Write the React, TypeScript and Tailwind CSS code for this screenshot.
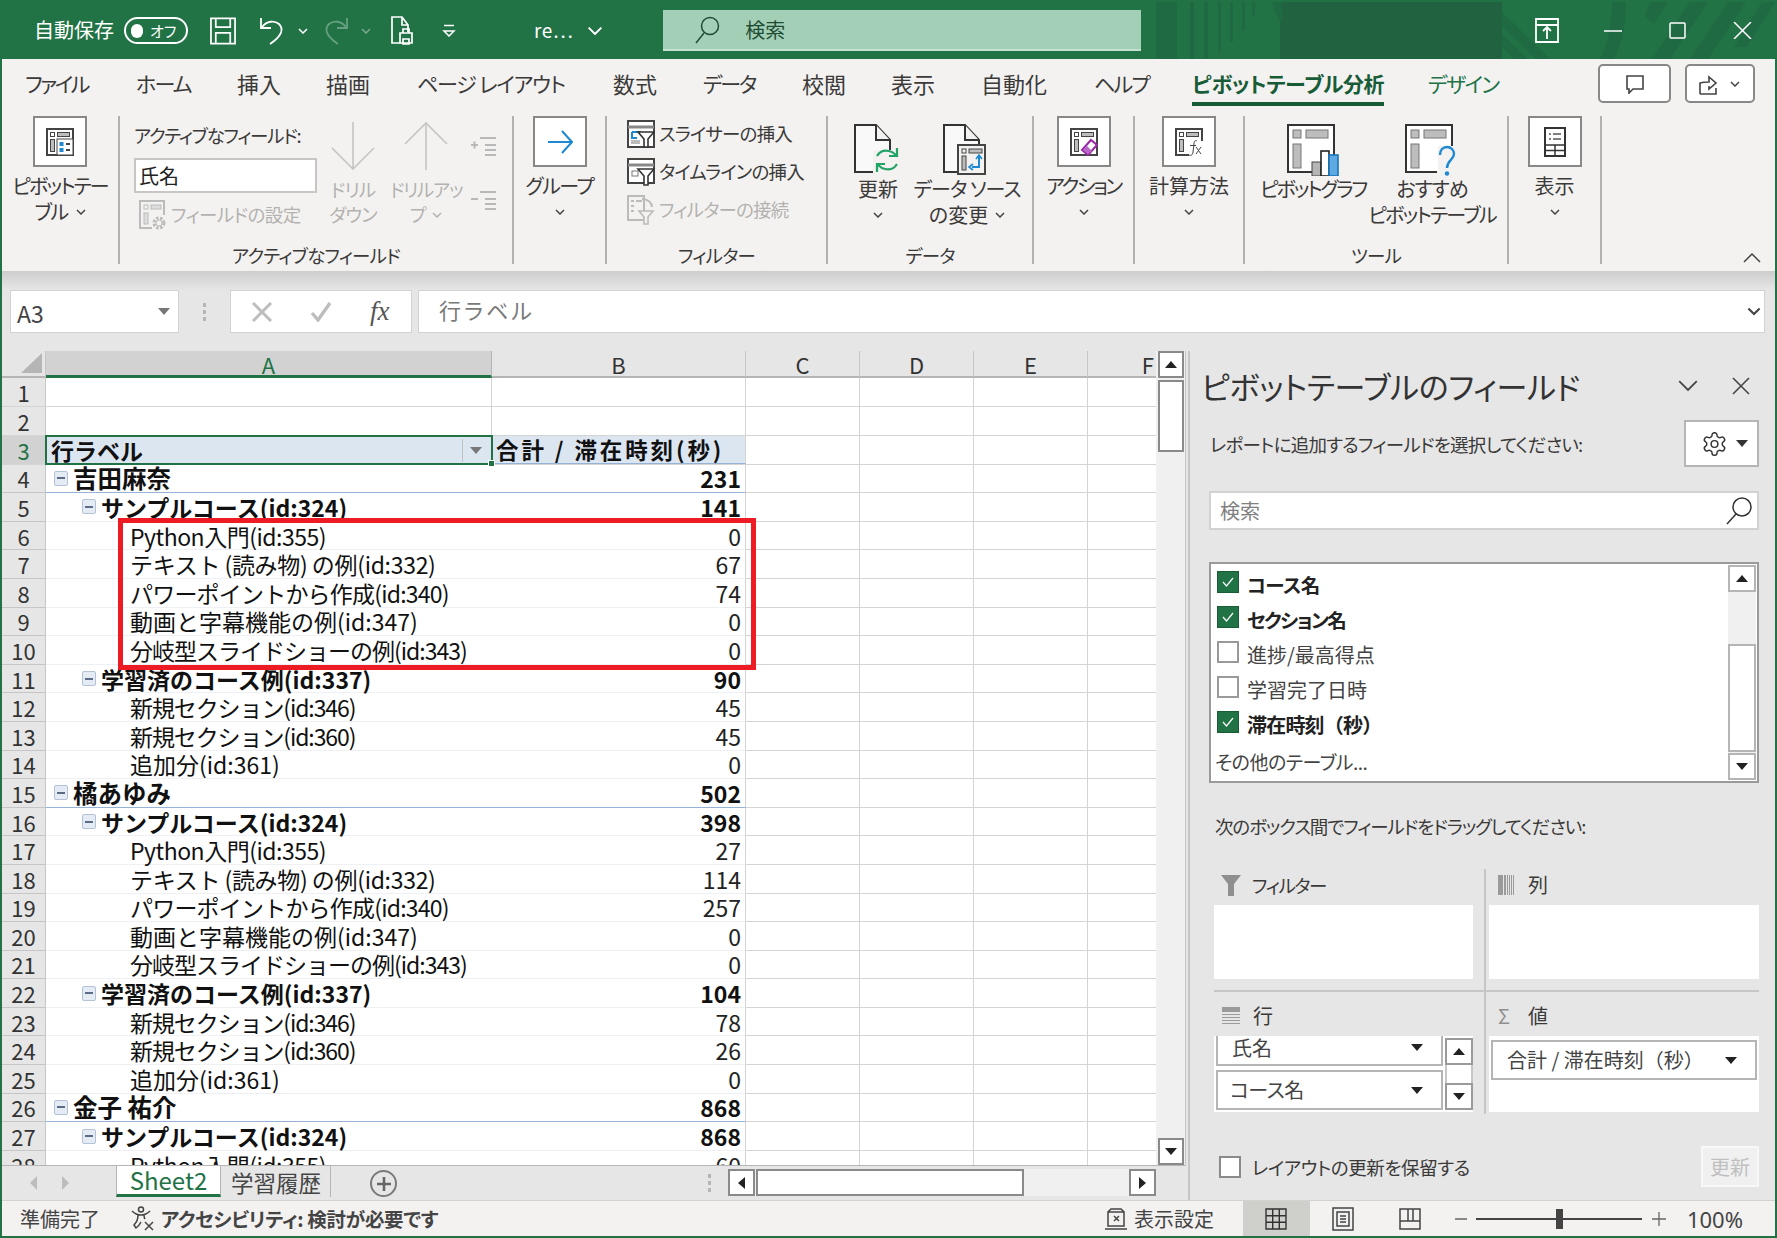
import React from "react";

function Chev({ className = "", w = 10, color = "#444", sw = 1.5 }: { className?: string; w?: number; color?: string; sw?: number }) {
  return (
    <svg width={w} height={w * 0.6} viewBox="0 0 10 6" className={className} fill="none" stroke={color} strokeWidth={sw}>
      <path d="M1 1l4 4 4-4" />
    </svg>
  );
}
function Tri({ dir = "down", color = "#222", className = "" }: { dir?: "down" | "up" | "left" | "right"; color?: string; className?: string }) {
  const d = { down: "M0 0h12L6 7z", up: "M0 7h12L6 0z", left: "M7 0v12L0 6z", right: "M0 0v12l7-6z" }[dir];
  const horiz = dir === "left" || dir === "right";
  return (
    <svg width={horiz ? 7 : 12} height={horiz ? 12 : 7} viewBox={horiz ? "0 0 7 12" : "0 0 12 7"} className={className}>
      <path d={d} fill={color} />
    </svg>
  );
}

function PivotBase({ size = 28, children }: { size?: number; children?: React.ReactNode }) {
  const c = "#444";
  const f = "#bdbdbd";
  return (
    <svg width={size} height={size} viewBox="0 0 28 28">
      <path d="M1 27V1h26v26z" fill="#fff" stroke={c} strokeWidth="2" />
      <rect x="4.5" y="4.5" width="4" height="4" fill="none" stroke={c} />
      <rect x="11.5" y="4.5" width="12" height="4" fill={f} stroke={c} />
      <rect x="4.5" y="11.5" width="4" height="12" fill={f} stroke={c} />
      {children}
    </svg>
  );
}
const PivotTableIcon = () => (
  <PivotBase>
    <rect x="11" y="11" width="16" height="16" fill="#fff" stroke="#444" />
    <rect x="13.5" y="14" width="4" height="4" fill="#1e88d2" />
    <rect x="13.5" y="20" width="4" height="4" fill="#1e88d2" />
    <path d="M20 16h4M20 22h4" stroke="#444" strokeWidth="2" />
  </PivotBase>
);
const ActionIcon = () => (
  <PivotBase>
    <path d="M12 22l9-10 6 5-9 10z" fill="#fff" stroke="#9a27a8" strokeWidth="2" />
    <path d="M13 22l4-4 5 5-4 3z" fill="#b867c6" />
  </PivotBase>
);
const CalcIcon = () => (
  <svg width="28" height="28" viewBox="0 0 28 28">
    <path d="M14 27H1V1h26v12" fill="#fff" stroke="#444" strokeWidth="2" />
    <rect x="4.5" y="4.5" width="4" height="4" fill="none" stroke="#444" />
    <rect x="11.5" y="4.5" width="12" height="4" fill="#bdbdbd" stroke="#444" />
    <rect x="4.5" y="11.5" width="4" height="12" fill="#bdbdbd" stroke="#444" />
    <path d="M22 13c-2-1-3 0-3 3l-1 8c-.3 3-2 4-4 3" fill="none" stroke="#444" />
    <path d="M15 17.5h6" stroke="#444" />
    <path d="M21 19l5 7M26 19l-5 7" stroke="#444" />
  </svg>
);
const ViewIcon = () => (
  <svg width="22" height="30" viewBox="0 0 22 30">
    <rect x="1" y="1" width="20" height="28" fill="#fff" stroke="#333" strokeWidth="2" />
    <path d="M5 7h2M9 7h8M5 12h2M9 12h8" stroke="#555" strokeWidth="1.5" />
    <path d="M1 18h20M1 23.5h20M11 18v11" stroke="#333" strokeWidth="1.5" />
  </svg>
);
const BigDoc = ({ children }: { children?: React.ReactNode }) => (
  <svg width="50" height="52" viewBox="0 0 50 52">
    <path d="M2 1h21l14 15v32H2z" fill="#f9f9f9" stroke="#333" strokeWidth="2" />
    <path d="M23 1v15h14" fill="#f3f2f1" stroke="#333" strokeWidth="2" />
    {children}
  </svg>
);
const RefreshIcon = () => (
  <BigDoc>
    <rect x="20" y="26" width="30" height="26" fill="#f3f2f1" />
    <path d="M24 32c3-5 8-6 12-5 3 .6 5 2 7 4" fill="none" stroke="#21a366" strokeWidth="2.2" />
    <path d="M44 24v8h-8" fill="none" stroke="#21a366" strokeWidth="2.2" />
    <path d="M44 40c-3 5-8 6-12 5-3-.6-5-2-7-4" fill="none" stroke="#21a366" strokeWidth="2.2" />
    <path d="M24 48v-8h8" fill="none" stroke="#21a366" strokeWidth="2.2" />
  </BigDoc>
);
const SourceIcon = () => (
  <BigDoc>
    <rect x="16" y="21" width="27" height="29" fill="#f3f2f1" stroke="#444" strokeWidth="2" />
    <rect x="20" y="25" width="4" height="4" fill="none" stroke="#444" />
    <rect x="27" y="25" width="13" height="4" fill="#bdbdbd" stroke="#444" />
    <rect x="20" y="32" width="4" height="14" fill="#bdbdbd" stroke="#444" />
    <path d="M37 32v11h-7" fill="none" stroke="#1e88d2" strokeWidth="2" />
    <path d="M34 35l3-4 3 4M31 40l-4 3 4 3" fill="none" stroke="#1e88d2" strokeWidth="1.6" />
  </BigDoc>
);
const PivotChartIcon = () => (
  <svg width="52" height="52" viewBox="0 0 52 52">
    <path d="M1 48V1h46v47z" fill="#fff" stroke="#333" strokeWidth="2" />
    <rect x="6" y="6" width="8" height="8" fill="#bdbdbd" stroke="#777" />
    <rect x="19" y="6" width="22" height="8" fill="#bdbdbd" stroke="#777" />
    <rect x="6" y="20" width="8" height="24" fill="#bdbdbd" stroke="#777" />
    <rect x="25" y="38" width="9" height="14" fill="#b5b5b5" stroke="#444" />
    <rect x="34" y="27" width="8" height="25" fill="#fff" stroke="#222" strokeWidth="1.6" />
    <rect x="42" y="31" width="9" height="21" fill="#5ea9e2" stroke="#1673b8" strokeWidth="1.6" />
  </svg>
);
const RecommendIcon = () => (
  <svg width="54" height="52" viewBox="0 0 54 52">
    <rect x="2" y="2" width="44" height="45" fill="#fff" />
    <rect x="6" y="6" width="8" height="8" fill="#bdbdbd" stroke="#777" />
    <rect x="19" y="6" width="22" height="8" fill="#bdbdbd" stroke="#777" />
    <rect x="6" y="20" width="8" height="24" fill="#bdbdbd" stroke="#777" />
    <path d="M47 22V1H1v47h31" stroke="#333" strokeWidth="2" fill="none" />
    <rect x="33" y="22" width="20" height="30" fill="#f3f2f1" />
    <path d="M35 31c0-5 3-8 7-8s7 3 7 7c0 6-7 6-7 14" fill="none" stroke="#1e88d2" strokeWidth="2.4" />
    <circle cx="42" cy="49.5" r="2.2" fill="#1e88d2" />
  </svg>
);
const Slicer = () => (
  <svg width="28" height="28" viewBox="0 0 28 28">
    <rect x="1" y="1" width="26" height="26" fill="#fff" stroke="#444" strokeWidth="2" />
    <path d="M1 7h26" stroke="#888" strokeWidth="3" />
    <path d="M5 12h9M5 12v6h5" stroke="#1e88d2" strokeWidth="2" fill="none" />
    <rect x="4" y="20" width="9" height="4" fill="#bbb" />
    <path d="M11 12h16l-6 7v8h-4v-8z" fill="#fff" stroke="#333" strokeWidth="1.6" />
  </svg>
);
const Timeline = () => (
  <svg width="28" height="28" viewBox="0 0 28 28">
    <rect x="1" y="1" width="26" height="24" fill="#fff" stroke="#444" strokeWidth="2" />
    <path d="M1 7h26" stroke="#888" strokeWidth="3" />
    <rect x="5" y="13" width="6" height="5" fill="#fff" stroke="#777" />
    <path d="M11 11h16l-6 7v9h-4v-9z" fill="#fff" stroke="#333" strokeWidth="1.6" />
  </svg>
);
const ConnectDis = () => (
  <svg width="28" height="30" viewBox="0 0 28 30">
    <path d="M1 1h16v24H1z" fill="#f3f2f1" stroke="#bbb" strokeWidth="2" />
    <path d="M4 6h3M9 6h6M4 11h3M4 16h3" stroke="#bbb" strokeWidth="2" />
    <path d="M15 4c6 0 10 4 10 8" fill="none" stroke="#bbb" strokeWidth="2" />
    <path d="M12 16h14l-5 6v7h-4v-7z" fill="#f3f2f1" stroke="#bbb" strokeWidth="1.6" />
  </svg>
);
const FieldSettingDis = () => (
  <svg width="28" height="30" viewBox="0 0 28 30">
    <path d="M1 29V1h24v14" fill="#f3f2f1" stroke="#bbb" strokeWidth="2" />
    <path d="M1 28h12" stroke="#bbb" strokeWidth="2" />
    <rect x="5" y="5" width="4" height="4" fill="none" stroke="#bbb" />
    <rect x="12" y="5" width="10" height="4" fill="#ddd" stroke="#bbb" />
    <rect x="5" y="13" width="4" height="11" fill="#ddd" stroke="#bbb" />
    <circle cx="20" cy="23" r="5" fill="none" stroke="#bbb" strokeWidth="3" strokeDasharray="2.5 1.5" />
    <circle cx="20" cy="23" r="3" fill="none" stroke="#bbb" />
  </svg>
);
const OutlineBtn = ({ plus }: { plus: boolean }) => (
  <svg width="25" height="20" viewBox="0 0 25 20" stroke="#b8b8b8" strokeWidth="2" fill="none">
    {plus ? <path d="M0 9h7M3.5 5.5v7" /> : <path d="M0 9h7" />}
    <path d="M9 2h16M14 9h11M14 14h11M14 19h11" />
  </svg>
);

function Box({ icon, label, trk = "" }: { icon: React.ReactNode; label: string; trk?: string }) {
  return (
    <div className="flex flex-col items-center w-full">
      <div className="w-[54px] h-[51px] bg-white border-2 border-[#8a8886] flex items-center justify-center">{icon}</div>
      <div className={"h-[26px] mt-[6px] leading-[26px] whitespace-nowrap text-[20px] text-[#3b3a39] " + trk}>{label}</div>
      <div className="h-[26px] flex items-center">
        <Chev />
      </div>
    </div>
  );
}

function Group({ className, label, children }: { className: string; label: string; children: React.ReactNode }) {
  return (
    <div className={"flex flex-col h-[148px] mt-[2px] border-r-2 border-[#b3b0ad] " + className}>
      <div className="flex h-[130px] shrink-0">{children}</div>
      <div className="text-center h-[18px] leading-[18px] text-[18.5px] tracking-[-0.8px] text-[#3b3a39] whitespace-nowrap shrink-0">{label}</div>
    </div>
  );
}

const TABS: [string, string][] = [
  ["ファイル", "w-[111px] text-[21px] tracking-[-2.4px]"],
  ["ホーム", "w-[101px] text-[21px] tracking-[-1.8px]"],
  ["挿入", "w-[89px] text-[22px]"],
  ["描画", "w-[91px] text-[22px]"],
  ["ページ レイアウト", "w-[196px] text-[21px] tracking-[-1.2px]"],
  ["数式", "w-[90px] text-[22px]"],
  ["データ", "w-[99px] text-[21px] tracking-[-2.2px]"],
  ["校閲", "w-[89px] text-[22px]"],
  ["表示", "w-[90px] text-[22px]"],
  ["自動化", "w-[113px] text-[22px]"],
  ["ヘルプ", "w-[98px] text-[21px] tracking-[-1.7px]"],
];

function TitleBar() {
  const c = "#fff";
  return (
    <div className="relative h-[57px] mt-[2px] flex items-center bg-[#217346] text-white shrink-0 overflow-hidden">
      <svg className="absolute left-[1000px] top-0" width="775" height="57" viewBox="1002 2 775 57" fill="#1f6a42">
        <rect x="1156" y="2" width="21" height="57" />
        <path d="M1190 2h4v57h-4zM1204 2h4v57h-4zM1218 2h3v50h-3zM1230 2h3v40h-3zM1242 2h3v28h-3zM1252 2h3v14h-3z" />
        <rect x="1280" y="0" width="222" height="60" fill="#216241" />
        <path d="M1272 2c2 10 5 16 10 20V2z" />
        <path d="M1502 12l48 47h-14l-34-33zM1502 34l26 25h-14l-12-12z" />
        <path d="M1612 2h14c0 22-4 42-12 57h-14c8-15 12-35 12-57z" />
        <path d="M1650 2h18l-14 22-9-8zM1690 2h18l-38 57h-18zM1728 2h18l-38 57h-18zM1762 2h13l-28 45h-13z" />
      </svg>
      <div className="relative flex items-center h-full w-full">
        <span className="ml-[32px] mb-[2px] text-[20px] whitespace-nowrap">自動保存</span>
        <div className="ml-[10px] w-[64px] h-[27px] rounded-full border-2 border-white flex items-center pl-[5px]">
          <div className="w-[12px] h-[14px] rounded-full bg-white" />
          <span className="ml-[7px] text-[15px] leading-none">オフ</span>
        </div>
        <svg className="ml-[22px]" width="26" height="28" viewBox="0 0 27 28" fill="none" stroke={c} strokeWidth="1.8">
          <path d="M1 1h25v26H1z" />
          <path d="M6 1v9h15V1M6 27V16h15v11" />
        </svg>
        <svg className="ml-[23px]" width="27" height="28" viewBox="0 0 27 28" fill="none" stroke={c} strokeWidth="1.8">
          <path d="M2 1v10h10" />
          <path d="M3 10c5-6 12-7 17-3 5 5 3 12-9 20" />
        </svg>
        <Chev className="ml-[12px]" color="#fff" />
        <svg className="ml-[14px] opacity-40" width="27" height="28" viewBox="0 0 27 28" fill="none" stroke="#cfe3d8" strokeWidth="1.8">
          <path d="M25 1v10H15" />
          <path d="M24 10c-5-6-12-7-17-3-5 5-3 12 9 20" />
        </svg>
        <Chev className="ml-[12px] opacity-40" color="#fff" />
        <svg className="ml-[20px]" width="26" height="29" viewBox="0 0 26 29" fill="none" stroke={c} strokeWidth="1.7">
          <path d="M9 27H1V1h10l6 8v7M11 1v8h6" />
          <path d="M9 17h12v10H9zM12 17v-4h6v4M12 23h6v5h-6z" />
        </svg>
        <svg className="ml-[25px]" width="14" height="13" viewBox="0 0 14 13" fill="none" stroke={c} strokeWidth="1.5">
          <path d="M2 1.5h10" />
          <path d="M2 7l5 5 5-5z" />
        </svg>
        <span className="ml-[78px] text-[19px] tracking-[0.5px] whitespace-nowrap">re…</span>
        <Chev className="ml-[14px]" color="#fff" w={16} sw={1.2} />
        <div className="ml-[60px] w-[478px] h-[41px] bg-[#a3cfb6] border-b-2 border-[#c4e0d0] flex items-center pl-[32px] text-[#1e4d33]">
          <svg width="25" height="28" viewBox="0 0 25 28" fill="none" stroke="#1e4d33" strokeWidth="1.5">
            <circle cx="15" cy="10" r="8.5" />
            <path d="M9 17L1 27" />
          </svg>
          <span className="ml-[25px] text-[20px]">検索</span>
        </div>
        <div className="ml-auto flex items-center">
          <svg width="24" height="25" viewBox="0 0 24 25" fill="none" stroke={c} strokeWidth="1.8">
            <path d="M1 1h22v23H1zM1 7h22" />
            <path d="M12 21v-11M8 13l4-4 4 4" />
          </svg>
          <svg className="ml-[45px]" width="18" height="2" viewBox="0 0 18 2"><path d="M0 1h18" stroke={c} strokeWidth="1.5" /></svg>
          <svg className="ml-[47px]" width="17" height="17" viewBox="0 0 17 17" fill="none" stroke={c} strokeWidth="1.5"><rect x="1" y="1" width="15" height="15" rx="1" /></svg>
          <svg className="ml-[47px] mr-[23px]" width="19" height="17" viewBox="0 0 19 17" fill="none" stroke={c} strokeWidth="1.5"><path d="M1 0l17 17M18 0L1 17" /></svg>
        </div>
      </div>
    </div>
  );
}

function Ribbon() {
  const dis = "text-[#b4b2b0]";
  const t20 = "text-[20px] text-[#3b3a39] whitespace-nowrap ";
  return (
    <div className="h-[212px] bg-[#f3f2f1] shrink-0 flex flex-col">
      <div className="h-[55px] flex">
        <div className="flex pl-[23px] pt-[8px]">
          {TABS.map(([t, w]) => (
            <div key={t} className={w + " h-[32px] leading-[32px] text-[#3b3a39] whitespace-nowrap"}>{t}</div>
          ))}
          <div className="w-[236px]">
            <div className="w-[192px] h-[32px] leading-[32px] text-[21px] tracking-[-0.4px] font-bold text-[#185c37] whitespace-nowrap">ピボットテーブル分析</div>
            <div className="w-[192px] h-[4px] mt-[3px] bg-[#185c37]" />
          </div>
          <div className="w-[71px] h-[32px] leading-[32px] text-[21px] tracking-[-1.6px] text-[#217346] whitespace-nowrap">デザイン</div>
        </div>
        <div className="ml-auto flex pt-[5px] pr-[20px] gap-[14px]">
          <div className="w-[73px] h-[39px] bg-white border-2 border-[#8a8886] rounded-[5px] flex items-center justify-center">
            <svg width="20" height="20" viewBox="0 0 20 20" fill="none" stroke="#444" strokeWidth="1.6"><path d="M2 2h16v13H8l-4 4v-4H2z" /></svg>
          </div>
          <div className="w-[70px] h-[39px] bg-white border-2 border-[#8a8886] rounded-[5px] flex items-center pl-[11px]">
            <svg width="22" height="24" viewBox="0 0 22 24" fill="none" stroke="#444" strokeWidth="1.6">
              <path d="M2 22V11c3-1 6-1 9-1V5l7 6-7 6v-3M2 22h16v-6" />
            </svg>
            <Chev className="ml-[10px]" />
          </div>
        </div>
      </div>
      <div className="flex">
        <Group className="w-[118px]" label="">
          <div className="w-full flex flex-col items-center">
            <div className="w-[54px] h-[51px] bg-white border-2 border-[#8a8886] flex items-center justify-center"><PivotTableIcon /></div>
            <div className={"h-[26px] mt-[6px] leading-[26px] tracking-[-1.9px] " + t20}>ピボットテー</div>
            <div className={"h-[26px] leading-[26px] tracking-[-1.5px] flex items-center " + t20}>ブル<Chev className="ml-[8px]" /></div>
          </div>
        </Group>
        <Group className="w-[394px]" label="アクティブなフィールド">
          <div className="w-[210px] pl-[14px] flex flex-col">
            <div className="h-[26px] mt-[6px] leading-[26px] text-[18.5px] tracking-[-1.3px] text-[#3b3a39] whitespace-nowrap">アクティブなフィールド:</div>
            <div className="mt-[10px] w-[183px] h-[35px] bg-white border-2 border-[#c8c6c4] flex items-center pl-[3px] text-[20px] text-[#222]">氏名</div>
            <div className={"mt-[7px] ml-[5px] flex items-center text-[18.5px] tracking-[-0.6px] whitespace-nowrap " + dis}>
              <FieldSettingDis />
              <span className="ml-[4px]">フィールドの設定</span>
            </div>
          </div>
          <div className={"w-[46px] flex flex-col items-center text-[18.5px] tracking-[-0.8px] " + dis}>
            <svg className="mt-[6px]" width="44" height="48" viewBox="0 0 44 48" fill="none" stroke="#c4c4c4" strokeWidth="1.6"><path d="M22 0v47M1 26l21 21 21-21" /></svg>
            <div className="h-[25px] mt-[7px] leading-[25px] whitespace-nowrap">ドリル</div>
            <div className="h-[25px] leading-[25px] whitespace-nowrap">ダウン</div>
          </div>
          <div className={"ml-[14px] w-[72px] flex flex-col items-center text-[18.5px] tracking-[-1.3px] " + dis}>
            <svg className="mt-[6px]" width="44" height="48" viewBox="0 0 44 48" fill="none" stroke="#c4c4c4" strokeWidth="1.6"><path d="M22 48V1M1 22L22 1l21 21" /></svg>
            <div className="h-[25px] mt-[7px] leading-[25px] whitespace-nowrap">ドリルアッ</div>
            <div className="h-[25px] leading-[25px] whitespace-nowrap flex items-center">プ<Chev className="ml-[7px]" color="#b4b2b0" /></div>
          </div>
          <div className="ml-[9px] flex flex-col">
            <div className="mt-[20px]"><OutlineBtn plus /></div>
            <div className="mt-[34px]"><OutlineBtn plus={false} /></div>
          </div>
        </Group>
        <Group className="w-[93px]" label="">
          <Box label="グループ" trk="tracking-[-1.4px]" icon={
            <svg width="26" height="24" viewBox="0 0 26 24" fill="none" stroke="#1e88d2" strokeWidth="2"><path d="M1 12h24M15 1l10 11-10 11" /></svg>
          } />
        </Group>
        <Group className="w-[221px]" label="フィルター">
          <div className="pl-[20px] pt-[4px] flex flex-col gap-[11px] text-[18.5px] tracking-[-0.8px] text-[#3b3a39] whitespace-nowrap">
            <div className="flex items-center h-[27px]"><Slicer /><span className="ml-[4px]">スライサーの挿入</span></div>
            <div className="flex items-center h-[27px]"><Timeline /><span className="ml-[4px]">タイムラインの挿入</span></div>
            <div className={"flex items-center h-[27px] " + dis}><ConnectDis /><span className="ml-[4px]">フィルターの接続</span></div>
          </div>
        </Group>
        <Group className="w-[206px]" label="データ">
          <div className="w-[100px] flex flex-col items-center pt-[8px]">
            <RefreshIcon />
            <div className={"h-[26px] leading-[26px] " + t20}>更新</div>
            <div className="h-[26px] flex items-center"><Chev /></div>
          </div>
          <div className="w-[78px] flex flex-col items-center pt-[8px]">
            <SourceIcon />
            <div className={"h-[26px] leading-[26px] tracking-[-0.9px] " + t20}>データ ソース</div>
            <div className={"h-[26px] leading-[26px] flex items-center " + t20}>の変更<Chev className="ml-[7px]" /></div>
          </div>
        </Group>
        <Group className="w-[101px]" label="">
          <Box label="アクション" trk="tracking-[-2.4px]" icon={<ActionIcon />} />
        </Group>
        <Group className="w-[110px]" label="">
          <Box label="計算方法" icon={<CalcIcon />} />
        </Group>
        <Group className="w-[264px]" label="ツール">
          <div className="w-[136px] flex flex-col items-center pt-[8px]">
            <PivotChartIcon />
            <div className={"h-[26px] leading-[26px] tracking-[-2.2px] " + t20}>ピボットグラフ</div>
          </div>
          <div className="w-[102px] flex flex-col items-center pt-[8px]">
            <RecommendIcon />
            <div className={"h-[26px] leading-[26px] tracking-[-1px] " + t20}>おすすめ</div>
            <div className={"h-[26px] leading-[26px] tracking-[-1.8px] " + t20}>ピボットテーブル</div>
          </div>
        </Group>
        <Group className="w-[93px]" label="">
          <Box label="表示" icon={<ViewIcon />} />
        </Group>
        <div className="ml-auto mt-[138px] mr-[14px] h-[12px]">
          <svg width="18" height="11" viewBox="0 0 18 11" fill="none" stroke="#444" strokeWidth="1.5"><path d="M1 10l8-8 8 8" /></svg>
        </div>
      </div>
    </div>
  );
}

function FormulaBar() {
  return (
    <div className="h-[80px] bg-[#e6e6e6] shrink-0 flex flex-col">
      <div className="h-[19px] bg-linear-to-b from-[#cdcdcd] to-[#e6e6e6]" />
      <div className="flex h-[43px] pl-[8px] pr-[10px]">
        <div className="w-[169px] bg-white border border-[#d2d2d2] flex items-center pl-[6px] pr-[8px] text-[23px] text-[#444]">
          <span className="mt-[3px]">A3</span><Tri className="ml-auto" color="#777" />
        </div>
        <div className="w-[51px] flex flex-col items-center justify-center gap-[3px]">
          <span className="w-[3px] h-[4px] bg-[#b5b5b5]" />
          <span className="w-[3px] h-[4px] bg-[#b5b5b5]" />
          <span className="w-[3px] h-[4px] bg-[#b5b5b5]" />
        </div>
        <div className="w-[182px] bg-white border border-[#d2d2d2] flex items-center pl-[21px]">
          <svg width="20" height="20" viewBox="0 0 20 20" stroke="#bdbdbd" strokeWidth="3"><path d="M1 1l18 18M19 1L1 19" /></svg>
          <svg className="ml-[38px]" width="22" height="20" viewBox="0 0 22 20" fill="none" stroke="#bdbdbd" strokeWidth="3.4"><path d="M2 11l6 7L20 1" /></svg>
          <span className="ml-[38px] font-['Liberation_Serif',serif] italic text-[27px] text-[#555]">fx</span>
        </div>
        <div className="ml-[6px] flex-1 bg-white border border-[#d2d2d2] flex items-center pl-[20px] pr-[3px] text-[22px] tracking-[3px] text-[#7a7a7a]">
          <span className="mb-[5px]">行ラベル</span>
          <Chev className="ml-auto" w={14} />
        </div>
      </div>
      <div className="flex-1" />
    </div>
  );
}

type Row = { n: number; lv: number; t: string; v: number };
const S1 = "サンプルコース(id:324)";
const S2 = "学習済のコース例(id:337)";
const P = "Python入門(id:355)";
const T = "テキスト\u2009(読み物)\u2009の例(id:332)";
const W = "パワーポイントから作成(id:340)";
const D = "動画と字幕機能の例(id:347)";
const B = "分岐型スライドショーの例(id:343)";
const N1 = "新規セクション(id:346)";
const N2 = "新規セクション(id:360)";
const A = "追加分(id:361)";
const TRK: Record<string, string> = {
  [P]: "tracking-[-0.5px]",
  [T]: "tracking-[-0.3px]",
  [W]: "tracking-[-0.8px]",
  [D]: "",
  [B]: "tracking-[-1px]",
  [N1]: "tracking-[-1.1px]",
  [N2]: "tracking-[-1.1px]",
  [A]: "",
};
const DATA: [number, string, number][] = [
  [0, "吉田麻奈", 231], [1, S1, 141], [2, P, 0], [2, T, 67], [2, W, 74], [2, D, 0], [2, B, 0],
  [1, S2, 90], [2, N1, 45], [2, N2, 45], [2, A, 0],
  [0, "橘あゆみ", 502], [1, S1, 398], [2, P, 27], [2, T, 114], [2, W, 257], [2, D, 0], [2, B, 0],
  [1, S2, 104], [2, N1, 78], [2, N2, 26], [2, A, 0],
  [0, "金子 祐介", 868], [1, S1, 868], [2, P, 60],
];
const ROWS: Row[] = DATA.map(([lv, t, v], i) => ({ n: i + 4, lv, t, v }));

const Minus = () => (
  <span className="w-[14px] h-[15px] shrink-0 rounded-[2px] bg-[#e4ebf4] border border-[#b4c2d6] flex items-center justify-center">
    <span className="w-[8px] h-[2px] bg-[#5a6b85]" />
  </span>
);

const Blanks = () => (
  <>
    <div className="w-[114px] h-full border-r border-[#d4d4d4] shrink-0" />
    <div className="w-[114px] h-full border-r border-[#d4d4d4] shrink-0" />
    <div className="w-[114px] h-full border-r border-[#d4d4d4] shrink-0" />
    <div className="w-[68px] h-full shrink-0" />
  </>
);

function RowHead({ n, sel = false }: { n: number; sel?: boolean }) {
  return (
    <div className={"w-[44px] h-full shrink-0 flex items-center justify-center border-r border-[#c6c6c6] text-[22px] font-normal " + (sel ? "bg-[#d2d2d2] text-[#217346]" : "bg-[#e6e6e6] text-[#333]")}>{n}</div>
  );
}

function Grid() {
  return (
    <div className="relative w-[1156px] h-[814px] bg-white overflow-hidden [font-feature-settings:normal] text-[23px] leading-[26px] text-[#111]">
      <div className="flex h-[27px] bg-[#e6e6e6] text-[22px] text-[#333] text-center leading-[26px]">
        <div className="w-[44px] border-r border-[#c6c6c6] flex items-end justify-end p-[3px] border-b-2 border-b-[#b5b5b5]">
          <svg width="21" height="20" viewBox="0 0 21 20"><path d="M21 0v20H0z" fill="#b5b5b5" /></svg>
        </div>
        <div className="w-[446px] bg-[#d2d2d2] text-[#217346] border-b-[3px] border-[#217346] border-r border-r-[#b5b5b5]">A</div>
        <div className="w-[254px] border-b-2 border-[#b5b5b5] border-r border-r-[#c6c6c6]">B</div>
        <div className="w-[114px] border-b-2 border-[#b5b5b5] border-r border-r-[#c6c6c6]">C</div>
        <div className="w-[114px] border-b-2 border-[#b5b5b5] border-r border-r-[#c6c6c6]">D</div>
        <div className="w-[114px] border-b-2 border-[#b5b5b5] border-r border-r-[#c6c6c6]">E</div>
        <div className="w-[68px] border-b-2 border-[#b5b5b5] text-right pr-[2px]">F</div>
      </div>
      {[1, 2].map((n) => (
        <div key={n} className="flex h-[29px] border-b border-[#d4d4d4]">
          <RowHead n={n} />
          <div className="w-[446px] border-r border-[#d4d4d4]" />
          <div className="w-[254px] border-r border-[#d4d4d4]" />
          <Blanks />
        </div>
      ))}
      <div className="flex h-[28.6px] border-b border-[#d4d4d4] font-bold">
        <RowHead n={3} sel />
        <div className="relative w-[446px] h-full bg-[#dce6f1] outline-2 outline-[#217346] -outline-offset-1 flex items-center pl-[5px]">
          行ラベル
          <div className="absolute right-[4px] top-[3px] w-[26px] h-[23px] border-l border-[#c0c0c0] flex items-center justify-center">
            <Tri color="#777" />
          </div>
          <span className="absolute right-[-3px] bottom-[-3px] w-[7px] h-[7px] bg-[#217346] border border-white" />
        </div>
        <div className="w-[254px] h-full bg-[#dce6f1] border-b border-[#95b3d7] flex items-center pl-[4px] text-[22.5px] tracking-[2.9px] whitespace-nowrap border-r border-r-[#d4d4d4]">合計 / 滞在時刻(秒)</div>
        <Blanks />
      </div>
      {ROWS.map((r) => (
        <div key={r.n} className="flex h-[28.6px]">
          <div className="flex w-[44px] h-full shrink-0 border-b border-[#c6c6c6]"><RowHead n={r.n} /></div>
          <div className={"flex w-[700px] h-full shrink-0 items-center border-r border-[#d4d4d4] whitespace-nowrap " + (r.lv === 0 ? "border-b border-b-[#95b3d7] font-bold " : r.lv === 1 ? "font-bold border-b border-b-[#eef0f3] " : "border-b border-b-[#eef0f3] ")}>
            {r.lv === 0 && <div className="pl-[8px] flex items-center gap-[5px] text-[24.5px]"><Minus />{r.t}</div>}
            {r.lv === 1 && <div className="pl-[36px] flex items-center gap-[5px]"><Minus />{r.t}</div>}
            {r.lv === 2 && <div className={"pl-[84px] font-normal " + TRK[r.t]}>{r.t}</div>}
            <div className={"ml-auto pr-[4px] " + (r.lv === 2 ? "text-[#222]" : "")}>{r.v}</div>
          </div>
          <div className="flex h-full border-b border-[#d4d4d4]"><Blanks /></div>
        </div>
      ))}
      <div className="absolute left-[116px] top-[167px] w-[638px] h-[152px] border-[5px] border-[#ed1c24]" />
    </div>
  );
}

function VScroll() {
  return (
    <div className="w-[30px] h-[814px] flex flex-col pl-[2px] pr-[1px] bg-[#f0f0f0] border-r border-[#c6c6c6] shrink-0">
      <div className="h-[27px] bg-white border-2 border-[#8a8a8a] flex items-center justify-center shrink-0"><Tri dir="up" /></div>
      <div className="h-[72px] mt-[2px] bg-white border-2 border-[#8a8a8a] shrink-0" />
      <div className="flex-1" />
      <div className="h-[27px] bg-white border-2 border-[#8a8a8a] flex items-center justify-center shrink-0"><Tri /></div>
    </div>
  );
}

function SheetBar() {
  return (
    <div className="h-[35px] flex bg-[#e6e6e6] border-t border-[#b5b5b5] shrink-0 leading-[26px] [font-feature-settings:normal]">
      <div className="w-[114px] flex items-center pl-[28px] gap-[24px] shrink-0">
        <svg width="8" height="14" viewBox="0 0 8 14"><path d="M7 0v14L0 7z" fill="#bdbdbd" /></svg>
        <svg width="8" height="14" viewBox="0 0 8 14"><path d="M0 0v14l7-7z" fill="#bdbdbd" /></svg>
      </div>
      <div className="w-[105px] h-[31px] bg-white border-l border-r border-[#b5b5b5] border-b-[3px] border-b-[#217346] flex items-center justify-center text-[24px] text-[#217346] shrink-0">Sheet2</div>
      <div className="w-[110px] h-[31px] flex items-center pl-[10px] border-r border-[#b5b5b5] text-[22.5px] text-[#444] whitespace-nowrap shrink-0">学習履歴</div>
      <div className="ml-[39px] mt-[4px] w-[27px] h-[27px] rounded-full border-2 border-[#7a7a7a] flex items-center justify-center text-[#666] shrink-0">
        <svg width="14" height="14" viewBox="0 0 14 14"><path d="M7 0v14M0 7h14" stroke="#666" strokeWidth="2.6" /></svg>
      </div>
      <div className="ml-[311px] flex flex-col items-center justify-center gap-[3px] shrink-0">
        <span className="w-[3px] h-[4px] bg-[#b5b5b5]" />
        <span className="w-[3px] h-[4px] bg-[#b5b5b5]" />
        <span className="w-[3px] h-[4px] bg-[#b5b5b5]" />
      </div>
      <div className="ml-[17px] flex w-[428px] h-[27px] mt-[3px] bg-[#f0f0f0] shrink-0">
        <div className="w-[27px] bg-white border-2 border-[#8a8a8a] flex items-center justify-center"><Tri dir="left" /></div>
        <div className="w-[268px] bg-white border-2 border-[#8a8a8a] ml-[1px]" />
        <div className="ml-auto w-[27px] bg-white border-2 border-[#8a8a8a] flex items-center justify-center"><Tri dir="right" /></div>
      </div>
    </div>
  );
}

function Check({ on }: { on: boolean }) {
  return on ? (
    <div className="w-[22px] h-[22px] mb-[6px] bg-[#217346] flex items-center justify-center shrink-0 border border-[#1a5c38]">
      <svg width="12" height="10" viewBox="0 0 12 10" fill="none" stroke="#fff" strokeWidth="1.2"><path d="M1 5l3.5 4L11 1" /></svg>
    </div>
  ) : (
    <div className="w-[22px] h-[22px] mb-[6px] bg-white border-2 border-[#9a9a9a] shrink-0" />
  );
}

function Panel() {
  const fields: [string, boolean, string][] = [
    ["コース名", true, "tracking-[-0.5px]"],
    ["セクション名", true, "tracking-[-1.5px]"],
    ["進捗/最高得点", false, "[font-feature-settings:normal] text-[20px]"],
    ["学習完了日時", false, "[font-feature-settings:normal] text-[20px]"],
    ["滞在時刻（秒）", true, "[font-feature-settings:normal] text-[20px] tracking-[-0.8px]"],
  ];
  const t = "text-[18.5px] whitespace-nowrap ";
  return (
    <div className="ml-[2px] flex-1 h-[849px] border-l-2 border-[#c6c6c6] flex flex-col text-[#3b3a39] leading-[26px]">
      <div className="h-[69px] flex items-center pl-[11px] shrink-0">
        <span className="text-[31px] leading-[40px] tracking-[-0.3px] text-[#333] whitespace-nowrap">ピボットテーブルのフィールド</span>
        <Chev className="ml-auto" w={22} sw={0.8} />
        <svg className="ml-[33px] mr-[25px]" width="18" height="18" viewBox="0 0 18 18" stroke="#444" strokeWidth="1.6"><path d="M1 1l16 16M17 1L1 17" /></svg>
      </div>
      <div className="h-[47px] flex items-center pl-[20px] pr-[16px] shrink-0">
        <span className={t + "tracking-[-0.75px]"}>レポートに追加するフィールドを選択してください:</span>
        <div className="ml-auto w-[75px] h-[47px] bg-white border-2 border-[#b5b5b5] flex items-center pl-[15px]">
          <svg width="27" height="30" viewBox="0 0 24 24" fill="none" stroke="#333" strokeWidth="1.3">
            <path d="M12.22 2h-.44a2 2 0 0 0-2 2v.18a2 2 0 0 1-1 1.73l-.43.25a2 2 0 0 1-2 0l-.15-.08a2 2 0 0 0-2.73.73l-.22.38a2 2 0 0 0 .73 2.73l.15.1a2 2 0 0 1 1 1.72v.51a2 2 0 0 1-1 1.74l-.15.09a2 2 0 0 0-.73 2.73l.22.38a2 2 0 0 0 2.73.73l.15-.08a2 2 0 0 1 2 0l.43.25a2 2 0 0 1 1 1.73V20a2 2 0 0 0 2 2h.44a2 2 0 0 0 2-2v-.18a2 2 0 0 1 1-1.73l.43-.25a2 2 0 0 1 2 0l.15.08a2 2 0 0 0 2.73-.73l.22-.39a2 2 0 0 0-.73-2.73l-.15-.08a2 2 0 0 1-1-1.74v-.5a2 2 0 0 1 1-1.74l.15-.09a2 2 0 0 0 .73-2.73l-.22-.38a2 2 0 0 0-2.73-.73l-.15.08a2 2 0 0 1-2 0l-.43-.25a2 2 0 0 1-1-1.73V4a2 2 0 0 0-2-2z" />
            <circle cx="12" cy="12" r="3" />
          </svg>
          <Tri className="ml-[8px]" color="#333" />
        </div>
      </div>
      <div className="mt-[24px] ml-[19px] mr-[16px] h-[39px] bg-white border-2 border-[#d2d2d2] flex items-center pl-[9px] pr-[5px] text-[20px] text-[#808080] shrink-0">
        検索
        <svg className="ml-auto" width="26" height="29" viewBox="0 0 26 29" fill="none" stroke="#333" strokeWidth="1.5">
          <circle cx="16" cy="11" r="9" />
          <path d="M10 18L1 28" />
        </svg>
      </div>
      <div className="mt-[32px] ml-[19px] mr-[16px] h-[221px] bg-white border-2 border-[#9a9a9a] flex shrink-0">
        <div className="flex-1 flex flex-col pl-[6px] pt-[3px]">
          {fields.map(([f, on, trk]) => (
            <div key={f} className={"h-[35px] flex items-center text-[19.5px] whitespace-nowrap " + (on ? "font-bold text-[#222]" : "text-[#444]")}>
              <Check on={on} />
              <span className={"ml-[8px] " + trk}>{f}</span>
            </div>
          ))}
          <div className="h-[35px] mt-[2px] flex items-center text-[19px] tracking-[-0.5px] text-[#444] whitespace-nowrap -ml-[2px]">その他のテーブル...</div>
        </div>
        <div className="w-[28px] flex flex-col bg-[#f0f0f0] mr-[1px] mt-[1px] mb-[1px]">
          <div className="h-[27px] bg-white border-2 border-[#b5b5b5] flex items-center justify-center shrink-0"><Tri dir="up" /></div>
          <div className="h-[52px]" />
          <div className="flex-1 bg-white border-2 border-[#b5b5b5]" />
          <div className="h-[27px] mt-[1px] bg-white border-2 border-[#b5b5b5] flex items-center justify-center shrink-0"><Tri /></div>
        </div>
      </div>
      <div className={"mt-[31px] h-[24px] leading-[24px] pl-[25px] tracking-[-1.1px] shrink-0 " + t}>次のボックス間でフィールドをドラッグしてください:</div>
      <div className="mt-[31px] ml-[24px] mr-[16px] grid grid-cols-[272px_1fr] grid-rows-[123px_122px] shrink-0">
        <div className="border-r-2 border-b-2 border-[#c6c6c6] pr-[11px]">
          <div className="h-[36px] flex items-center pb-[4px] pl-[7px] whitespace-nowrap">
            <svg width="20" height="22" viewBox="0 0 20 22"><path d="M0 1h20l-7 9v12H7V10z" fill="#8f8f8f" /></svg>
            <span className="ml-[11px] text-[18.5px] tracking-[-1.4px]">フィルター</span>
          </div>
          <div className="h-[74px] bg-white" />
        </div>
        <div className="border-b-2 border-[#c6c6c6] pl-[3px]">
          <div className="h-[36px] flex items-center pb-[4px] pl-[9px] text-[20px]">
            <svg width="17" height="20" viewBox="0 0 17 20" fill="#9a9a9a"><path d="M0 0h5v20H0zM6 0h2v20H6zM9 0h1v20H9zM11 0h1v20h-1zM13 0h1v20h-1zM15 0h1v20h-1z" /></svg>
            <span className="ml-[13px]">列</span>
          </div>
          <div className="h-[74px] bg-white" />
        </div>
        <div className="border-r-2 border-[#c6c6c6] pr-[11px] flex flex-col">
          <div className="h-[44px] pt-[3px] flex items-center pl-[8px] text-[20px]">
            <svg width="18" height="18" viewBox="0 0 18 18" fill="#9a9a9a"><path d="M0 0h18v5H0zM0 7h18v1H0zM0 10h18v1H0zM0 13h18v1H0zM0 16h18v1H0z" /></svg>
            <span className="ml-[13px]">行</span>
          </div>
          <div className="h-[76px] bg-white flex">
            <div className="w-[230px] pl-[2px] flex flex-col">
              <div className="h-[30px] pb-[5px] border-x-2 border-b-2 border-[#b5b5b5] flex items-center pl-[14px] pr-[18px] text-[20px] text-[#444] overflow-hidden">氏名<Tri className="ml-auto" /></div>
              <div className="h-[40px] mt-[4px] border-2 border-[#b5b5b5] flex items-center pl-[12px] pr-[18px] text-[20px] tracking-[-0.5px] text-[#444]">コース名<Tri className="ml-auto" /></div>
            </div>
            <div className="w-[28px] ml-[2px] pt-[2px] flex flex-col">
              <div className="h-[27px] bg-white border-2 border-[#9a9a9a] flex items-center justify-center"><Tri dir="up" /></div>
              <div className="h-[18px] bg-white border-x-2 border-[#c6c6c6]" />
              <div className="h-[27px] bg-white border-2 border-[#9a9a9a] flex items-center justify-center"><Tri /></div>
            </div>
          </div>
        </div>
        <div className="pl-[3px] flex flex-col">
          <div className="h-[44px] pt-[3px] flex items-center pl-[9px] text-[20px]">
            <span className="text-[20px] text-[#8f8f8f] w-[17px]">Σ</span>
            <span className="ml-[13px]">値</span>
          </div>
          <div className="h-[76px] bg-white px-[2px] pt-[4px]">
            <div className="h-[40px] border-2 border-[#b5b5b5] flex items-center pl-[14px] pr-[18px] text-[20px] text-[#444] whitespace-nowrap [font-feature-settings:normal]">合計 / 滞在時刻（秒）<Tri className="ml-auto" /></div>
          </div>
        </div>
      </div>
      <div className="mt-[32px] flex ml-[29px] mr-[16px] items-center shrink-0">
        <div className="w-[22px] h-[22px] bg-white border-2 border-[#8a8a8a] shrink-0" />
        <span className={"ml-[11px] tracking-[-0.4px] " + t}>レイアウトの更新を保留する</span>
        <div className="ml-auto w-[58px] h-[41px] bg-[#f0f0f0] border-2 border-[#f8f8f8] flex items-center justify-center text-[20px] text-[#c0c0c0]">更新</div>
      </div>
    </div>
  );
}

function StatusBar() {
  return (
    <div className="h-[36px] bg-[#f3f2f1] border-t border-[#d2d2d2] flex items-center text-[20px] text-[#444] shrink-0 leading-[26px]">
      <span className="ml-[18px]">準備完了</span>
      <svg className="ml-[31px]" width="24" height="25" viewBox="0 0 24 25" fill="none" stroke="#444" strokeWidth="1.5">
        <circle cx="10" cy="3.5" r="2.5" />
        <path d="M1 5c3 3 6 4 9 4s6-1 9-4M7 9c0 4-1 7-4 10l2 3c3-2 4-4 5-6M13 9c0 2 .3 3 1 4" />
        <path d="M14 16l8 8M22 16l-8 8" />
      </svg>
      <span className="ml-[6px] font-bold text-[19.5px] tracking-[-0.3px] whitespace-nowrap">アクセシビリティ: 検討が必要です</span>
      <svg className="ml-auto" width="24" height="24" viewBox="0 0 24 24" fill="none" stroke="#444" strokeWidth="1.5">
        <path d="M4 19h16V5H4zM1 22h22M4 5l3-3h10l3 3" />
        <path d="M10 9l5 5M15 9l-5 5" />
      </svg>
      <span className="ml-[6px] whitespace-nowrap">表示設定</span>
      <div className="ml-[29px] w-[67px] h-full bg-[#cfcfcb] flex items-center justify-center shrink-0">
        <svg width="22" height="22" viewBox="0 0 22 22" fill="none" stroke="#333" strokeWidth="1.4"><path d="M1 1h20v20H1zM1 7.7h20M1 14.3h20M7.7 1v20M14.3 1v20" /></svg>
      </div>
      <div className="w-[67px] flex justify-center shrink-0">
        <svg width="22" height="24" viewBox="0 0 22 24" fill="none" stroke="#444" strokeWidth="1.5"><path d="M1 1h20v22H1zM5 5h12v14H5zM8 9h6M8 12h6M8 15h6" /></svg>
      </div>
      <div className="w-[67px] flex justify-center shrink-0">
        <svg width="22" height="22" viewBox="0 0 22 22" fill="none" stroke="#444" strokeWidth="1.5"><path d="M1 1h20v20H1zM1 13h8V1M9 13h12M14 1v12" /></svg>
      </div>
      <svg className="ml-[11px] shrink-0" width="12" height="2" viewBox="0 0 12 2"><path d="M0 1h12" stroke="#666" strokeWidth="1.5" /></svg>
      <div className="ml-[9px] w-[166px] h-[20px] flex items-center shrink-0">
        <div className="w-[80px] h-[2px] bg-[#444]" />
        <div className="w-[7px] h-[20px] bg-[#444]" />
        <div className="flex-1 h-[2px] bg-[#444]" />
      </div>
      <svg className="ml-[10px] shrink-0" width="14" height="14" viewBox="0 0 14 14"><path d="M0 7h14M7 0v14" stroke="#666" strokeWidth="1.3" /></svg>
      <span className="ml-[21px] mr-[32px] text-[22px] whitespace-nowrap font-['Noto_Sans',sans-serif]">100%</span>
    </div>
  );
}

export default function App() {
  return (
    <div className="w-[1777px] h-[1238px] overflow-hidden bg-[#217346] px-[2px] pb-[2px] flex flex-col font-['Noto_Sans_CJK_JP',sans-serif] [font-feature-settings:'palt'] leading-normal">
      <TitleBar />
      <Ribbon />
      <FormulaBar />
      <div className="flex bg-[#e6e6e6] h-[849px] shrink-0">
        <div className="w-[1184px] flex flex-col shrink-0">
          <div className="flex">
            <Grid />
            <VScroll />
          </div>
          <SheetBar />
        </div>
        <Panel />
      </div>
      <StatusBar />
    </div>
  );
}
